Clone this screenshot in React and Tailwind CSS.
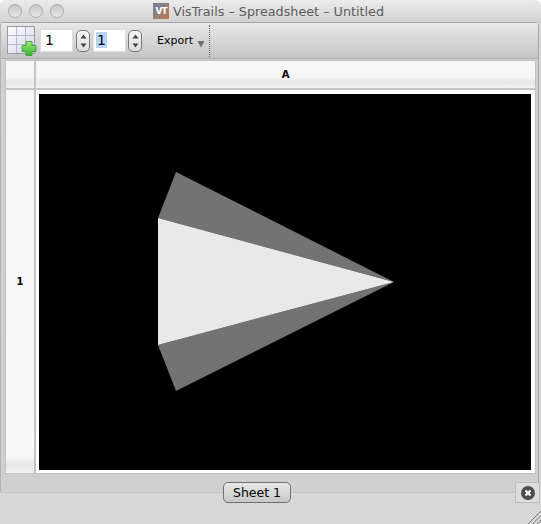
import React from "react";

const TrafficLight = () => (
  <span className="block w-[14px] h-[14px] rounded-full border border-[#adadad] bg-gradient-to-b from-[#c6c6c6] to-[#e8e8e8]" />
);

const Stepper = () => (
  <div className="w-[14px] h-[22px] rounded-[5px] border border-[#777777] bg-gradient-to-b from-[#f4f4f4] to-[#dddddd] flex flex-col items-center justify-center gap-[4px]">
    <svg width="7" height="5" viewBox="0 0 7 5"><path d="M3.5 0.5L6.5 4.5H0.5Z" fill="#444444" /></svg>
    <svg width="7" height="5" viewBox="0 0 7 5"><path d="M3.5 4.5L6.5 0.5H0.5Z" fill="#444444" /></svg>
  </div>
);

const AddSheetIcon = () => (
  <svg width="32" height="31" viewBox="0 0 32 31" className="shrink-0">
    <defs>
      <linearGradient id="sheetFill" x1="0" y1="0" x2="1" y2="1">
        <stop offset="0" stopColor="#ffffff" />
        <stop offset="1" stopColor="#d4d4ee" />
      </linearGradient>
      <linearGradient id="plusFill" x1="0" y1="0" x2="0" y2="1">
        <stop offset="0" stopColor="#9be87a" />
        <stop offset="1" stopColor="#35b52f" />
      </linearGradient>
    </defs>
    <rect x="1.5" y="1.5" width="27" height="27" fill="url(#sheetFill)" stroke="#9a9aa8" />
    <path d="M10.500 2V28M19.500 2V28M2 10.500H28M2 19.500H28" stroke="#b8b8c8" fill="none" />
    <path d="M20 16.500H26V20.500H30V26.500H26V30.500H20V26.500H16V20.500H20Z" fill="url(#plusFill)" stroke="#3a9a35" strokeWidth="0.8" />
  </svg>
);

const ExportArrow = () => (
  <svg width="8" height="8" viewBox="0 0 8 8" className="mt-[6px]"><path d="M0.5 1H7.500L4 7.500Z" fill="#6e6e6e" /></svg>
);

const Plot = () => (
  <svg viewBox="0 0 492 376" className="block w-full h-full">
    <rect width="492" height="376" fill="#000000" />
    <polygon points="137,78 119,124 355,188" fill="#737373" />
    <polygon points="137,297 119,251 355,188" fill="#737373" />
    <polygon points="119,124 119,251 355,188" fill="#e9e9e9" />
  </svg>
);

export default function App() {
  return (
    <div className="w-[541px] h-[524px] bg-white overflow-hidden font-['DejaVu_Sans',sans-serif]">
      <div className="w-full h-full rounded-t-[6px] bg-[#d8d8d8] flex flex-col">
        {/* Title bar */}
        <div className="h-[22px] shrink-0 rounded-t-[6px] bg-gradient-to-b from-[#ececec] to-[#d2d2d2] flex items-center relative">
          <div className="flex items-center gap-[7px] pl-[8px]">
            <TrafficLight />
            <TrafficLight />
            <TrafficLight />
          </div>
          <div className="absolute left-[153px] top-[3px] flex items-start gap-[4px]">
            <span className="w-[16px] h-[16px] bg-gradient-to-br from-[#6d7fa3] to-[#b9784a] text-white text-[9px] font-bold leading-[16px] text-center tracking-[-1px]">VT</span>
            <span className="text-[12.750px] leading-[17px] text-[#5c5c5c] whitespace-nowrap">VisTrails – Spreadsheet – Untitled</span>
          </div>
        </div>

        {/* Window panel */}
        <div className="h-[471px] shrink-0 mr-[2px] border border-[#a6a6a6] border-l-[#b4b4b4] border-b-[#c2c2c2] rounded-[3px] bg-[#d0d0d0] flex flex-col">
          {/* Toolbar */}
          <div className="h-[36px] shrink-0 bg-gradient-to-b from-[#e8e8e8] to-[#c4c4c4] flex items-center pl-[5px] border-b border-[#b0b0b0]">
            <AddSheetIcon />
            <div className="ml-[2px] w-[33px] h-[23px] bg-white border border-[#dddddd] text-[14px] leading-[21px] pl-[4px] text-black">1</div>
            <div className="ml-[3px]"><Stepper /></div>
            <div className="ml-[3px] w-[33px] h-[23px] bg-white border border-[#dddddd] text-[14px] leading-[21px] pl-[2px] text-black">
              <span className="bg-[#b5d5ff] px-[1px]">1</span>
            </div>
            <div className="ml-[2px]"><Stepper /></div>
            <span className="ml-[15px] mt-[2px] text-[11px] text-black">Export</span>
            <span className="ml-[4px]"><ExportArrow /></span>
            <div className="ml-[4px] h-[32px] border-l border-dotted border-[#666666]" />
          </div>

          {/* Table */}
          <div className="flex-1 min-h-0 pt-[1px] px-[4px] pb-[2px]">
            <div className="w-[531px] h-[414px] border border-[#c2c2c2] bg-white grid grid-cols-[30px_1fr] grid-rows-[29px_1fr]">
              <div className="bg-[linear-gradient(#f8f8f8_0%,#f6f6f6_60%,#e8e8e8_78%,#f2f2f2_100%)] border-r-2 border-b-2 border-[#c4c4c4]" />
              <div className="bg-[linear-gradient(#f8f8f8_0%,#f6f6f6_60%,#e8e8e8_78%,#f2f2f2_100%)] border-b-2 border-[#c4c4c4] flex items-center justify-center text-[10px] font-bold text-black">A</div>
              <div className="bg-[linear-gradient(#f6f6f6_0%,#f9f9f9_95%,#e8e8e8_98%,#f2f2f2_100%)] border-r-2 border-[#c4c4c4] flex items-center justify-center text-[10px] font-bold text-black">1</div>
              <div className="bg-white pt-[4px] pl-[3px] pr-[4px] pb-[3px]">
                <Plot />
              </div>
            </div>
          </div>
        </div>

        {/* Sheet tabs */}
        <div className="flex-1 min-h-0 relative flex justify-center">
          <div className="absolute left-[223px] top-[-11px] w-[68px] h-[21px] rounded-[5px] border border-[#6f6f6f] bg-gradient-to-b from-[#e8e8e8] to-[#c8c8c8] text-[12.500px] leading-[19px] text-center text-black">Sheet 1</div>
          <div className="absolute left-[515px] top-[-11px] w-[25px] h-[21px] bg-[#dcdcdc] border border-[#bdbdbd] flex items-center justify-center">
            <svg width="14" height="14" viewBox="0 0 14 14">
              <circle cx="7" cy="7" r="7" fill="#4d4d4d" />
              <path d="M4.500 4.500L9.500 9.500M9.500 4.500L4.500 9.500" stroke="#ffffff" strokeWidth="2" />
            </svg>
          </div>
          <svg width="14" height="14" viewBox="0 0 14 14" className="absolute right-0 bottom-0">
            <path d="M1 14L14 1M5.500 14L14 5.500M10 14L14 10" stroke="#777777" fill="none" />
          </svg>
        </div>
      </div>
    </div>
  );
}
